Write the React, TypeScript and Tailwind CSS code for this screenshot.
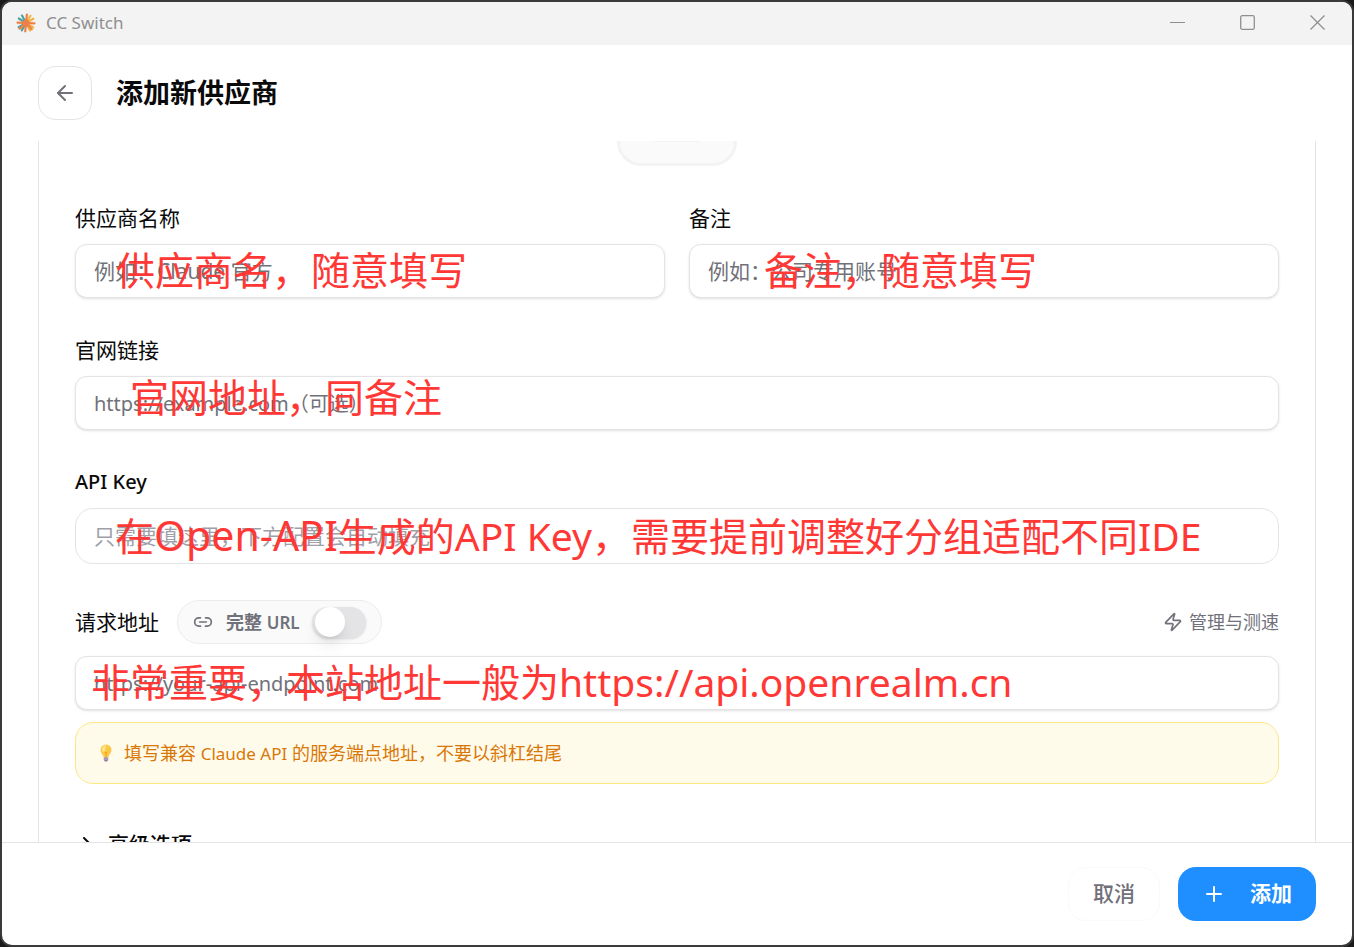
import { ArrowLeft, ChevronRight, Link2, Plus, Zap } from 'lucide-react'
import { InputHTMLAttributes, PropsWithChildren } from 'react'

const RAYS = [
  { angle: 32, color: '#f0b545' },
  { angle: 62, color: '#f0b545' },
  { angle: 120, color: '#4fa3a5' },
  { angle: 150, color: '#4fa3a5' },
  { angle: 212, color: '#4fa3a5' },
  { angle: 242, color: '#4fa3a5' },
  { angle: 302, color: '#f0b545' },
  { angle: 330, color: '#f0b545' },
  { angle: 2, color: '#ee8145' },
  { angle: 48, color: '#ee8145' },
  { angle: 95, color: '#ee8145' },
  { angle: 138, color: '#ee8145' },
  { angle: 182, color: '#ee8145' },
  { angle: 276, color: '#ee8145' },
]

function Logo() {
  return (
    <svg className="size-5" viewBox="0 0 20 20" aria-hidden="true">
      {RAYS.map(({ angle, color }) => (
        <line
          key={angle}
          x1="10"
          y1="10"
          x2="18.5"
          y2="10"
          stroke={color}
          strokeWidth="2.200"
          strokeLinecap="round"
          transform={`rotate(${angle} 10 10)`}
        />
      ))}
      <circle cx="10" cy="10" r="3.500" fill="#ee7f48" />
    </svg>
  )
}

function Bulb() {
  return (
    <svg className="h-[18px] w-3" viewBox="0 0 12 18" aria-hidden="true">
      <path d="M6 .5A5.5 5.5 0 0 0 .5 6c0 2.400 1.600 3.700 2.500 5.500l.8 2h4.400l.8-2C9.900 9.700 11.500 8.400 11.500 6A5.500 5.500 0 0 0 6 .5Z" fill="#fcc846" />
      <path d="M6 1.500A4 4 0 0 0 2 5.500c0 1.500 1 2.500 2 2.500s2-5 2-6.500Z" fill="#fee58a" />
      <path d="M4.500 8 6 9l1.500-1M6 9v4.500" stroke="#f59b2d" fill="none" />
      <path d="M3.800 13.500h4.400v2.500L7 17.500H5L3.800 16Z" fill="#8f7a9c" />
      <path d="M3.800 15h4.400" stroke="#d4c6dc" strokeWidth=".8" />
    </svg>
  )
}

function TitleBar() {
  return (
    <div className="flex h-[43px] shrink-0 items-center bg-[#f3f3f3] pb-0.5 pl-[14px] text-[#8f8f8f]">
      <Logo />
      <span className="ml-[10px] grow text-[17px] leading-6">CC Switch</span>
      <button type="button" aria-label="最小化" className="flex h-full w-[70px] items-center justify-center">
        <svg width="15" height="15" viewBox="0 0 15 15" stroke="currentColor">
          <path d="M0 7.500h15" />
        </svg>
      </button>
      <button type="button" aria-label="最大化" className="flex h-full w-[70px] items-center justify-center">
        <svg width="15" height="15" viewBox="0 0 15 15" fill="none" stroke="currentColor" strokeWidth="1.300">
          <rect x=".7" y=".7" width="13.600" height="13.600" rx="1.500" />
        </svg>
      </button>
      <button type="button" aria-label="关闭" className="flex h-full w-[70px] items-center justify-center">
        <svg width="15" height="15" viewBox="0 0 15 15" stroke="currentColor" strokeWidth="1.300">
          <path d="M.5.5l14 14M14.500.5l-14 14" />
        </svg>
      </button>
    </div>
  )
}

function Label({ htmlFor, className = 'text-[21px]', children }: PropsWithChildren<{ htmlFor: string; className?: string }>) {
  return (
    <label htmlFor={htmlFor} className={`leading-7 text-[#0a0a0b] ${className}`}>
      {children}
    </label>
  )
}

function TextInput({ className = 'text-[21px]', ...props }: InputHTMLAttributes<HTMLInputElement>) {
  return (
    <input
      {...props}
      className={`block h-[54px] w-full rounded-xl border border-[#e4e4e7] bg-white px-[18px] shadow-sm outline-none placeholder:text-[#71717a] ${className}`}
    />
  )
}

// Red remark laid over a field
function Note({ className, children }: PropsWithChildren<{ className: string }>) {
  return (
    <span className={`pointer-events-none absolute text-[39px] leading-[54px] whitespace-nowrap text-[#ff3836] ${className}`}>
      {children}
    </span>
  )
}

function ProviderForm() {
  return (
    <form id="provider" className="flex flex-col border-x border-[#e4e4e7] px-9">
      <div className="flex h-[25px] w-[120px] justify-center self-center rounded-b-3xl border-x-3 border-b-3 border-[#f3f3f3] bg-[#fafafa]">
        <div className="h-px w-[46px] bg-[#f3f3f3]" />
      </div>

      <div className="mt-[38px] grid grid-cols-2 gap-6">
        <div className="flex flex-col gap-3">
          <Label htmlFor="name">供应商名称</Label>
          <div className="relative">
            <TextInput id="name" placeholder="例如：Claude 官方" />
            <Note className="-top-px left-[41px]">供应商名，随意填写</Note>
          </div>
        </div>
        <div className="flex flex-col gap-3">
          <Label htmlFor="remark">备注</Label>
          <div className="relative">
            <TextInput id="remark" placeholder="例如：公司专用账号" />
            <Note className="-top-px left-[75px]">备注，随意填写</Note>
          </div>
        </div>
      </div>

      <div className="mt-[38px] flex flex-col gap-3">
        <Label htmlFor="website">官网链接</Label>
        <div className="relative">
          <TextInput id="website" className="text-xl" placeholder="https://example.com（可选）" />
          <Note className="-top-1.5 left-[55px]">官网地址，同备注</Note>
        </div>
      </div>

      <div className="mt-[38px] flex flex-col gap-3">
        <Label htmlFor="key" className="text-[20px] font-medium">
          API Key
        </Label>
        <div className="relative">
          <input
            id="key"
            placeholder="只需要填这里，下方配置会自动填充"
            className="block h-14 w-full rounded-[18px] border border-[#e4e4e7] bg-white px-[18px] text-[21px] outline-none placeholder:text-[#9f9fa9]"
          />
          <Note className="top-0 left-10">
            在<span className="text-[41px]">Open-API</span>生成的API Key，需要提前调整好分组适配不同IDE
          </Note>
        </div>
      </div>

      <div className="mt-9 flex items-center">
        <Label htmlFor="endpoint">请求地址</Label>
        <label className="ml-[18px] flex h-11 items-center rounded-full border border-[#ececee] bg-[#fafafa] px-[15px] text-lg font-semibold text-[#71717a]">
          <Link2 className="size-5" />
          <span className="ml-[13px]">
            完整 <span className="text-[17px]">URL</span>
          </span>
          <input
            type="checkbox"
            role="switch"
            className="ml-3 flex h-[31px] w-[54px] appearance-none items-center rounded-full bg-[#e4e4e7] px-[3px] shadow-sm before:size-[30px] before:rounded-full before:bg-white before:shadow-lg"
          />
        </label>
        <button type="button" className="ml-auto flex items-center gap-[6px] text-lg text-[#71717a]">
          <Zap className="size-5" />
          管理与测速
        </button>
      </div>
      <div className="relative mt-3">
        <TextInput id="endpoint" className="text-xl" placeholder="https://your-api-endpoint.com" />
        <Note className="-top-px left-4">非常重要，本站地址一般为https://api.openrealm.cn</Note>
      </div>

      <div className="mt-3 flex h-[62px] items-center gap-3 rounded-[18px] border border-[#fee685] bg-[#fffbeb] px-6 text-lg text-[#d97706]">
        <Bulb />
        <p>
          填写兼容 <span className="text-[17px]">Claude API</span> 的服务端点地址，不要以斜杠结尾
        </p>
      </div>

      <button type="button" className="mt-[46px] flex items-center gap-[9px] self-start text-[21px] leading-7 font-medium text-[#0a0a0b]">
        <ChevronRight className="size-6" />
        高级选项
      </button>
    </form>
  )
}

function App() {
  return (
    <div className="h-screen bg-[#1a1a1b] font-['Noto_Sans','Noto_Sans_CJK_SC',sans-serif]">
      <div className="flex h-full flex-col overflow-hidden rounded-xl border-2 border-[#3a3a3b] bg-white">
        <TitleBar />
        <header className="flex shrink-0 items-center gap-6 px-9 py-[21px]">
          <button
            type="button"
            aria-label="返回"
            className="flex size-[54px] items-center justify-center rounded-[18px] border border-[#e4e4e7] text-[#71717a]"
          >
            <ArrowLeft className="size-6" />
          </button>
          <h1 className="text-[27px] leading-9 font-bold text-[#0a0a0b]">添加新供应商</h1>
        </header>
        <main className="min-h-0 grow overflow-y-auto px-9 [scrollbar-width:none]">
          <ProviderForm />
        </main>
        <footer className="flex shrink-0 justify-end gap-[18px] border-t border-[#e4e4e7] px-9 py-6">
          <button type="button" className="h-[54px] rounded-[18px] border border-[#fafafa] px-6 text-[21px] font-medium text-[#71717a]">
            取消
          </button>
          <button
            type="submit"
            form="provider"
            className="flex h-[54px] items-center gap-6 rounded-[18px] bg-[#1f8fff] px-6 text-[21px] font-bold text-white"
          >
            <Plus className="size-6" />
            添加
          </button>
        </footer>
      </div>
    </div>
  )
}

export default App
